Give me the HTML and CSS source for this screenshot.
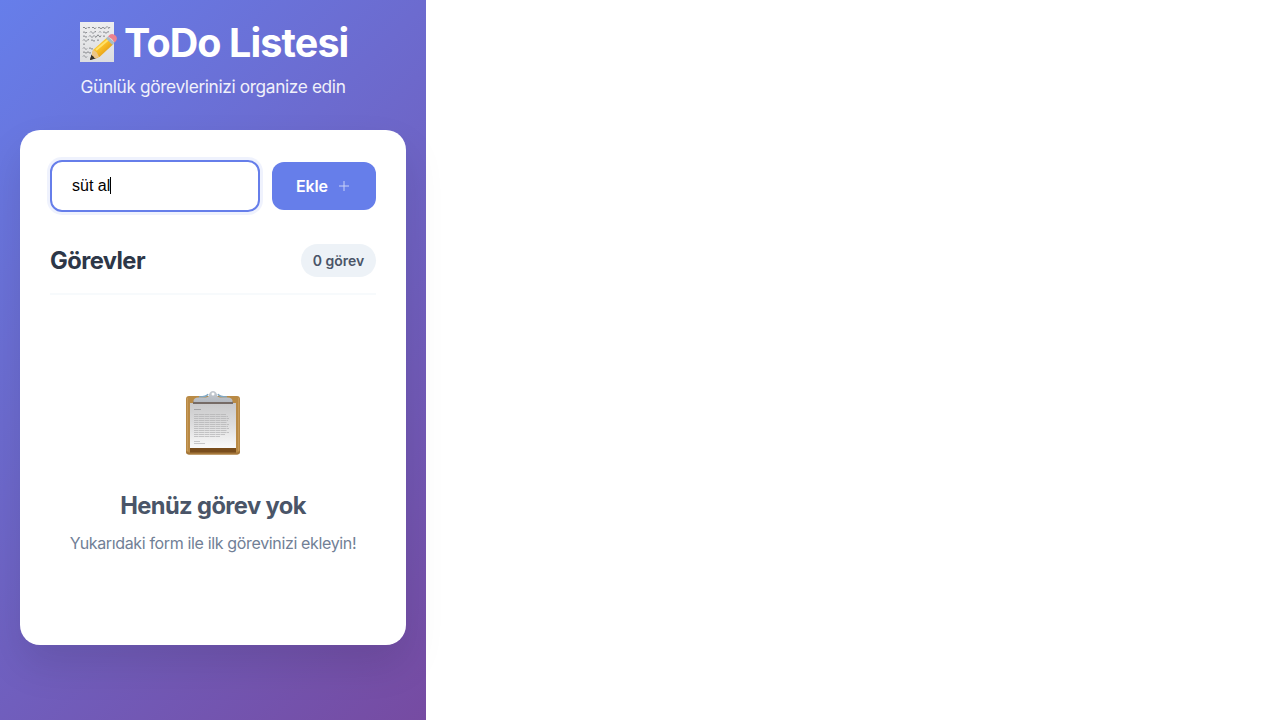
FILE: index.html
```html
<!DOCTYPE html>
<html lang="tr">
<head>
<meta charset="utf-8">
<title>ToDo Listesi</title>
<link rel="stylesheet" href="styles.css">
</head>
<body>
<div class="app">
  <header class="header">
    <h1 class="title">
      <svg class="memo" viewBox="0 0 40 42" aria-hidden="true">
        <defs>
          <linearGradient id="sheet" x1="0" y1="0" x2="0" y2="1"><stop offset="0" stop-color="#eeeeef"/><stop offset="1" stop-color="#dcdde0"/></linearGradient>
          <linearGradient id="wood" x1="0" y1="0" x2="1" y2="1"><stop offset="0" stop-color="#ffdf55"/><stop offset=".5" stop-color="#f7b923"/><stop offset="1" stop-color="#c77c0a"/></linearGradient>
        </defs>
        <rect x="1" y="1" width="34" height="40" fill="url(#sheet)"/>
        <path d="M4 7q1-2 2 0t2-.5M9 7q1-1.500 2 0M13 7q1-2 2 0t2-.5M19 7q1-1.500 2 0t2 0 2 0 2-.5 2 0 2-.5M4 11.500q1-1.500 2 0t2-.5M11 11.500q1-2 2 0t2 0 2-.5M20 11.500q1-2 2 0M24 11.500q1-1.500 2 0t2 0 2-.5M4 15.500q1-1.500 2 0t2 0M10 15.500q1-2 2 0t2 0 2 0 2-.5 2 0 2-.5M24 15.500q1-1.500 2 0M4 19.500q1-2 2 0t2 0 2-.5M12 19.500q1-1.500 2 0t2 0M18 19.500q1-1.500 2 0M4 23.500q1-1.500 2 0M4 27.500q1-2 2 0t2 0M10 27.500q1-1.500 2 0t2 0M4 31.500q1-1.500 2 0t2 0 2 0 2 0M4 35.500q1-2 2 0t2 0" fill="none" stroke="#6f7176" stroke-width=".8"/>
        <path d="M12 38l2-9 6 6z" fill="#e8c38a"/>
        <path d="M11 39l1.500-5.500 4.500 4z" fill="#39332b"/>
        <path d="M13 34L14 29 28 16.500l6.500 6.500L21 35.500 17 37.500z" fill="url(#wood)"/>
        <path d="M13 34l1-5q4 1 6 7l-4 1.500z" fill="#edc687"/>
        <path d="M11 39l1.300-4.500q2 .5 3 3z" fill="#39332b"/>
        <path d="M17 29L30 18" stroke="#ffe26b" stroke-width="2"/>
        <path d="M27 17.500l2-2 6.500 6-2 2.500z" fill="#a7bcc8"/>
        <path d="M29 15.500l2-2q3-1.500 5.500 1t.5 5.500l-1.500 1.500q-2-4-6.500-6z" fill="#ee8290"/>
      </svg><span>ToDo Listesi</span>
    </h1>
    <p class="subtitle">Günlük görevlerinizi organize edin</p>
  </header>
  <main class="card">
    <form class="add-form">
      <div class="task-input"><span>süt al</span><i class="caret"></i></div>
      <button class="add-button" type="button"><span>Ekle</span>
        <svg class="plus" viewBox="0 0 12 12" aria-hidden="true"><path d="M6 1v10M1 6h10" stroke="#fff" stroke-width="1" opacity=".65"/></svg>
      </button>
    </form>
    <div class="list-header">
      <h2 class="list-title">Görevler</h2>
      <span class="count">0 görev</span>
    </div>
    <section class="empty">
      <svg class="clipboard" viewBox="0 0 56 66" aria-hidden="true">
        <defs>
          <linearGradient id="page" x1="0" y1="0" x2="0" y2="1"><stop offset="0" stop-color="#c9c9ca"/><stop offset=".5" stop-color="#dededf"/><stop offset="1" stop-color="#fafafa"/></linearGradient>
          <linearGradient id="clip" x1="0" y1="0" x2="0" y2="1"><stop offset="0" stop-color="#c4cad1"/><stop offset="1" stop-color="#b4b9c0"/></linearGradient>
        </defs>
        <rect x="1" y="6" width="54" height="58.500" rx="3" fill="#b98a45"/>
        <path d="M2.500 8v53M53.500 8v53" stroke="#c89b59"/>
        <path d="M5 57h46v6H5z" fill="#794d1c"/>
        <path d="M1 61q0 3.500 3 3.500h48q3 0 3-3.500v-.5q-1 2-3 2H4q-2 0-3-2z" fill="#a4763a"/>
        <rect x="5" y="13" width="46" height="45" fill="url(#page)"/>
        <path d="M8 11.500h40v2.500H8z" fill="#766b66"/>
        <path d="M14 7q8 0 9-3M42 7q-8 0-9-3" stroke="#7fa7c3" stroke-width="1.500" fill="none"/>
        <path d="M8.500 12q-.5-4.500 5-4.500h7q3.500 0 3.500-3 1-3.500 4-3.500t4 3.500q0 3 3.500 3h7q5.500 0 5 4.500z" fill="url(#clip)"/>
        <circle cx="28" cy="4" r="1.500" fill="#fff"/>
        <path d="M9 19.500h7" stroke="#a3a3a5"/>
        <g stroke="#adadaf" stroke-width=".65"><path d="M9 24.500h32M9 26.500h34M9 28.500h35M9 30.500h34M9 32.500h33M9 34.500h35M9 36.500h34M9 38.500h35M9 40.500h33M9 42.500h35M9 44.500h31M9 46.500h26" stroke-dasharray="4 .5 6 .5"/><path d="M9 51.500h6M9 53.500h11"/></g>
      </svg>
      <h3 class="empty-title">Henüz görev yok</h3>
      <p class="empty-text">Yukarıdaki form ile ilk görevinizi ekleyin!</p>
    </section>
  </main>
</div>
</body>
</html>
```
FILE: styles.css
```css
* { box-sizing: border-box; margin: 0; padding: 0; }
body { background: #fff; font-family: Inter, "Liberation Sans", sans-serif; overflow: hidden; }
.app { width: 426px; height: 720px; padding: 20px; background: linear-gradient(135deg, #667eea 0%, #764ba2 100%); }
.header { height: 110px; color: #fff; text-align: center; }
.title { display: flex; height: 46px; padding-left: 59px; align-items: center; gap: 5px; font-size: 39.500px; line-height: 46px; font-weight: 700; letter-spacing: -0.9px; white-space: nowrap; }
.memo { width: 40px; height: 42px; flex: none; margin-top: -2px; }
.subtitle { margin-top: 10px; font-size: 17.300px; line-height: 22px; opacity: .9; letter-spacing: -0.37px; white-space: nowrap; }
.card { height: 515px; padding: 30px; border-radius: 20px; background: #fff; box-shadow: 0 20px 40px rgba(0, 0, 0, .1); }
.add-form { display: flex; gap: 12px; align-items: center; height: 52px; }
.task-input { display: flex; align-items: center; width: 210px; height: 52px; padding: 0 20px; border: 2px solid #667eea; border-radius: 12px; box-shadow: 0 0 0 3px rgba(102, 126, 234, .1); color: #000; font: 16px "Liberation Sans", Arial, sans-serif; }
.caret { width: 1px; height: 17px; margin-bottom: 1px; background: #000; }
.add-button { display: flex; align-items: center; gap: 10px; width: 104px; height: 48px; padding: 0 24px; border: 0; border-radius: 12px; background: #667eea; color: #fff; font: 600 16px Inter, sans-serif; letter-spacing: -0.2px; }
.plus { width: 12px; height: 12px; flex: none; }
.list-header { display: flex; align-items: center; justify-content: space-between; height: 53px; margin-top: 30px; padding: 2px 0 16px; border-bottom: 2px solid #f7fafc; }
.list-title { color: #2d3748; font-size: 23.700px; font-weight: 700; letter-spacing: -0.56px; }
.count { display: flex; align-items: center; justify-content: center; width: 75px; height: 33px; border-radius: 20px; background: #edf2f7; color: #4a5568; font-size: 14px; font-weight: 600; letter-spacing: 0; white-space: nowrap; }
.empty { display: flex; flex-direction: column; align-items: center; padding-top: 95px; }
.clipboard { width: 56px; height: 66px; }
.empty-title { margin-top: 35px; color: #4a5568; font-size: 23.700px; line-height: 30px; font-weight: 700; letter-spacing: -0.6px; white-space: nowrap; }
.empty-text { margin-top: 12px; color: #718096; font-size: 16px; line-height: 20px; letter-spacing: -0.35px; white-space: nowrap; }
```
